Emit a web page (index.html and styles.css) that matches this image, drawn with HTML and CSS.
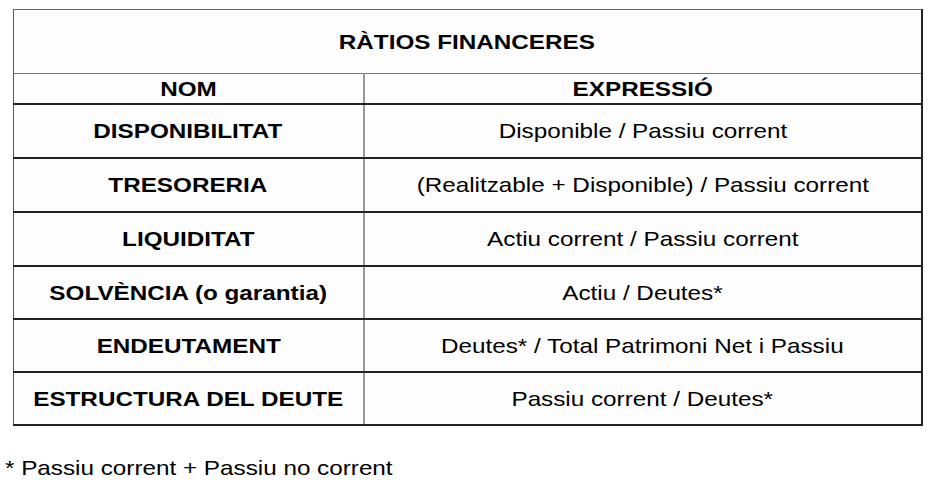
FILE: index.html
```html
<!DOCTYPE html>
<html lang="ca">
<head>
<meta charset="utf-8">
<title>Ràtios financeres</title>
<link rel="stylesheet" href="styles.css">
</head>
<body>
<div class="sheet">
  <table class="ratios">
    <colgroup><col class="col-name"><col class="col-expr"></colgroup>
    <thead>
      <tr class="title-row"><th colspan="2"><span class="t">RÀTIOS FINANCERES</span></th></tr>
      <tr class="head-row"><th class="name"><span class="t">NOM</span></th><th class="expr"><span class="t">EXPRESSIÓ</span></th></tr>
    </thead>
    <tbody>
      <tr><th class="name"><span class="t">DISPONIBILITAT</span></th><td class="expr"><span class="t">Disponible / Passiu corrent</span></td></tr>
      <tr><th class="name"><span class="t">TRESORERIA</span></th><td class="expr"><span class="t">(Realitzable + Disponible) / Passiu corrent</span></td></tr>
      <tr><th class="name"><span class="t">LIQUIDITAT</span></th><td class="expr"><span class="t">Actiu corrent / Passiu corrent</span></td></tr>
      <tr><th class="name"><span class="t">SOLVÈNCIA (o garantia)</span></th><td class="expr"><span class="t">Actiu / Deutes*</span></td></tr>
      <tr><th class="name"><span class="t">ENDEUTAMENT</span></th><td class="expr"><span class="t">Deutes* / Total Patrimoni Net i Passiu</span></td></tr>
      <tr><th class="name"><span class="t">ESTRUCTURA DEL DEUTE</span></th><td class="expr"><span class="t">Passiu corrent / Deutes*</span></td></tr>
    </tbody>
  </table>
  <p class="note"><span class="t">* Passiu corrent + Passiu no corrent</span></p>
</div>
</body>
</html>
```
FILE: styles.css
```css
html, body {
  margin: 0;
  padding: 0;
  background: #ffffff;
}
body {
  font-family: "Liberation Sans", Arial, sans-serif;
  color: #000;
  font-size: 21px;
}
.sheet {
  padding: 9px 0 0 13px;
}
.ratios {
  border-collapse: collapse;
  width: 908px;
  table-layout: fixed;
  background: #fdfdfd;
}
.col-name { width: 350px; }
.col-expr { width: 558px; }
.ratios th, .ratios td {
  padding: 0;
  text-align: center;
  vertical-align: middle;
  border-bottom: 2px solid #222;
}
.ratios th { font-weight: bold; }
.ratios td { font-weight: normal; }
.t {
  display: inline-block;
  transform: scaleX(1.155);
  white-space: nowrap;
}
.title-row th {
  height: 63px;
  border-top: 1px solid #666;
  border-left: 1px solid #555;
  border-right: 2px solid #222;
  border-bottom: 1px solid #777;
}
.head-row th { height: 29px; }
.name {
  border-left: 1px solid #555;
  border-right: 2px solid #999;
}
.expr {
  border-right: 2px solid #222;
}
tbody tr { height: 54px; }
tbody tr:nth-child(4), tbody tr:nth-child(5), tbody tr:nth-child(6) { height: 53px; }
.note {
  margin: 30px 0 0 -8px;
  font-size: 21px;
}
.note .t {
  transform-origin: left center;
}
```
